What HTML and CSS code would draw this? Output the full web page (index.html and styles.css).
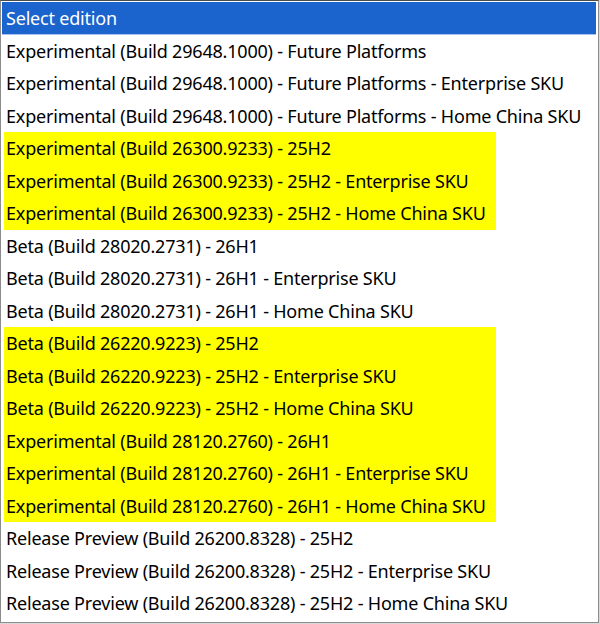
FILE: index.html
```html
<!DOCTYPE html>
<html lang="en">
<head>
    <meta charset="UTF-8">
    <title>Select edition</title>
    <link rel="stylesheet" href="styles.css">
</head>
<body>
    <div class="list">
        <div class="opt header">Select edition</div>
        <div class="opt">Experimental (Build 29648.1000) - Future Platforms</div>
        <div class="opt">Experimental (Build 29648.1000) - Future Platforms - Enterprise SKU</div>
        <div class="opt">Experimental (Build 29648.1000) - Future Platforms - Home China SKU</div>
        <div class="mark">
            <div class="opt">Experimental (Build 26300.9233) - 25H2</div>
            <div class="opt">Experimental (Build 26300.9233) - 25H2 - Enterprise SKU</div>
            <div class="opt">Experimental (Build 26300.9233) - 25H2 - Home China SKU</div>
        </div>
        <div class="opt">Beta (Build 28020.2731) - 26H1</div>
        <div class="opt">Beta (Build 28020.2731) - 26H1 - Enterprise SKU</div>
        <div class="opt">Beta (Build 28020.2731) - 26H1 - Home China SKU</div>
        <div class="mark">
            <div class="opt">Beta (Build 26220.9223) - 25H2</div>
            <div class="opt">Beta (Build 26220.9223) - 25H2 - Enterprise SKU</div>
            <div class="opt">Beta (Build 26220.9223) - 25H2 - Home China SKU</div>
            <div class="opt">Experimental (Build 28120.2760) - 26H1</div>
            <div class="opt">Experimental (Build 28120.2760) - 26H1 - Enterprise SKU</div>
            <div class="opt">Experimental (Build 28120.2760) - 26H1 - Home China SKU</div>
        </div>
        <div class="opt">Release Preview (Build 26200.8328) - 25H2</div>
        <div class="opt">Release Preview (Build 26200.8328) - 25H2 - Enterprise SKU</div>
        <div class="opt">Release Preview (Build 26200.8328) - 25H2 - Home China SKU</div>
    </div>
</body>
</html>
```

FILE: styles.css
```css
body {
    margin: 0;
    background-color: #d9d9d9;
    font-family: "Noto Sans", "Open Sans", sans-serif;
    color: #000;
}

.list {
    width: 594px;
    height: 619px;
    background-color: #fff;
    border: 1px solid #8c8c8c;
    border-top-color: #4d4d4d;
    padding: 1px 2px 1px 1px;
    overflow: hidden;
}

.opt {
    height: 32.5px;
    line-height: 32.5px;
    padding: 0 6px 0 4px;
    font-size: 18px;
    letter-spacing: -0.2px;
    white-space: nowrap;
}

.header {
    background-color: #1b64cd;
    color: #fff;
    box-shadow: inset 0 -1px 0 #a9c3ee;
}

.mark {
    width: fit-content;
    margin-left: 2px;
    padding-right: 4px;
    background-color: #ffff00;
}

.mark .opt {
    padding-left: 2px;
}
```
